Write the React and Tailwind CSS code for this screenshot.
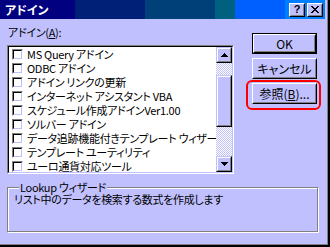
import React from 'react'

const items = [
  'MS Query アドイン',
  'ODBC アドイン',
  'アドイン リンクの更新',
  'インターネット アシスタント VBA',
  'スケジュール作成アドインVer1.00',
  'ソルバー アドイン',
  'データ追跡機能付きテンプレート ウィザード',
  'テンプレート ユーティリティ',
  'ユーロ通貨対応ツール',
]

// win98 style raised push button
function Button({ children, isDefault }) {
  const body = (
    <div className="h-full w-full border border-t-white border-l-white border-b-black border-r-black">
      <div className="h-full w-full border border-t-[#c0c0ff] border-l-[#c0c0ff] border-b-[#808080] border-r-[#808080] flex items-center justify-center text-[12px] leading-none text-black">
        {children}
      </div>
    </div>
  )
  if (isDefault) {
    return <div className="h-[21px] w-[65px] border border-black">{body}</div>
  }
  return <div className="h-[21px] w-[65px]">{body}</div>
}

function ScrollButton({ up }) {
  return (
    <div className="h-[16px] w-[16px] border border-t-[#c0c0ff] border-l-[#c0c0ff] border-b-black border-r-black">
      <div className="h-full w-full border border-t-white border-l-white border-b-[#808080] border-r-[#808080] bg-[#c0c0ff] flex items-center justify-center">
        <svg width="7" height="4" viewBox="0 0 7 4" shapeRendering="crispEdges">
          {up ? (
            <path d="M3 0h1v1h1v1h1v1h1v1H0V3h1V2h1V1h1z" fill="#000" />
          ) : (
            <path d="M0 0h7v1H6v1H5v1H4v1H3V3H2V2H1V1H0z" fill="#000" />
          )}
        </svg>
      </div>
    </div>
  )
}

function TitleButton({ children }) {
  return (
    <div className="h-[14px] w-[16px] border border-t-white border-l-white border-b-black border-r-black">
      <div className="h-full w-full border border-t-[#c0c0ff] border-l-[#c0c0ff] border-b-[#808080] border-r-[#808080] bg-[#c0c0ff] flex items-center justify-center">
        {children}
      </div>
    </div>
  )
}

function CheckBox() {
  return (
    <div className="h-[11px] w-[11px] shrink-0 border border-t-[#808080] border-l-[#808080] border-b-white border-r-white">
      <div className="h-full w-full border border-t-black border-l-black border-b-[#c0c0ff] border-r-[#c0c0ff] bg-white" />
    </div>
  )
}

export default function App() {
  return (
    <div className="w-[330px] h-[247px] bg-black overflow-hidden font-['Noto_Sans_CJK_JP','Liberation_Sans',sans-serif] [font-feature-settings:'palt'] text-black">
      <div className="w-[328px] h-[245px] bg-[#c0c0ff] border-r border-b border-r-[#808080] border-b-[#808080] flex flex-col">
        {/* title bar */}
        <div className="h-[19px] w-[325px] shrink-0 flex items-center pl-[5px] pr-[2px] bg-[linear-gradient(to_right,#000080_75px,#002078_75px,#002078_145px,#004078_145px,#004078_215px,#006080_215px,#006080_235px,#0060ff_235px,#0060ff_285px,#0080ff_285px)]">
          <span className="text-white font-bold text-[12px] leading-none">アドイン</span>
          <div className="ml-auto flex gap-[2px]">
            <TitleButton>
              <span className="font-['Liberation_Sans',sans-serif] font-bold text-[11px] leading-none">?</span>
            </TitleButton>
            <TitleButton>
              <svg width="8" height="7" viewBox="0 0 8 7" shapeRendering="crispEdges">
                <path d="M0 0h2v1h1v1h2V1h1V0h2v1H7v1H6v1H5v1h1v1h1v1h1v1H6V6H5V5H3v1H2v1H0V6h1V5h1V4h1V3H2V2H1V1H0z" fill="#000" />
              </svg>
            </TitleButton>
          </div>
        </div>

        {/* body */}
        <div className="flex pl-[7px] pt-[6px]">
          <div className="w-[227px] flex flex-col">
            <div className="h-[14px] pl-[1px] text-[11px] leading-[14px] tracking-[-0.3px]">
              アドイン(<span className="underline underline-offset-1">A</span>):
            </div>
            <div className="mt-[6px] h-[129px] border border-t-[#808080] border-l-[#808080] border-b-white border-r-white">
              <div className="h-full w-full flex border border-t-black border-l-black border-b-[#c0c0ff] border-r-[#c0c0ff]">
                <div className="flex-1 bg-white overflow-hidden pl-[3px]">
                  {items.map((t) => (
                    <div key={t} className="h-[14px] flex items-center gap-[4px] whitespace-nowrap text-[11px] leading-none tracking-[-0.3px]">
                      <CheckBox />
                      <span>{t}</span>
                    </div>
                  ))}
                </div>
                <div className="w-[16px] flex flex-col bg-[repeating-conic-gradient(#c0c0ff_0_25%,#ffffff_0_50%)] bg-[length:2px_2px]">
                  <ScrollButton up />
                  <div className="mt-[12px] h-[52px] border border-t-[#c0c0ff] border-l-[#c0c0ff] border-b-black border-r-black">
                    <div className="h-full w-full border border-t-white border-l-white border-b-[#808080] border-r-[#808080] bg-[#c0c0ff]" />
                  </div>
                  <div className="flex-1" />
                  <ScrollButton />
                </div>
              </div>
            </div>
          </div>

          <div className="ml-[18px] mt-[8px] flex flex-col gap-[4px]">
            <Button isDefault>OK</Button>
            <Button>キャンセル</Button>
            <div className="relative">
              <Button>
                <span>
                  参照(<span className="underline underline-offset-1">B</span>)...
                </span>
              </Button>
              <div className="absolute left-[-6px] top-[-3px] w-[75px] h-[30px] border-2 border-[#ff0000] rounded-[6px] pointer-events-none" />
            </div>
          </div>
        </div>

        {/* description group */}
        <fieldset className="ml-[7px] mt-[7px] w-[311px] h-[51px] border border-[#808080] shadow-[1px_1px_0_#ffffff,inset_1px_1px_0_#ffffff] pl-[6px]">
          <legend className="ml-[5px] px-[1px] text-[11px] leading-[12px] tracking-[-0.3px] bg-[#c0c0ff]">Lookup ウィザード</legend>
          <div className="text-[11px] leading-[13px] tracking-[-0.3px]">リスト中のデータを検索する数式を作成します</div>
        </fieldset>
      </div>
    </div>
  )
}
